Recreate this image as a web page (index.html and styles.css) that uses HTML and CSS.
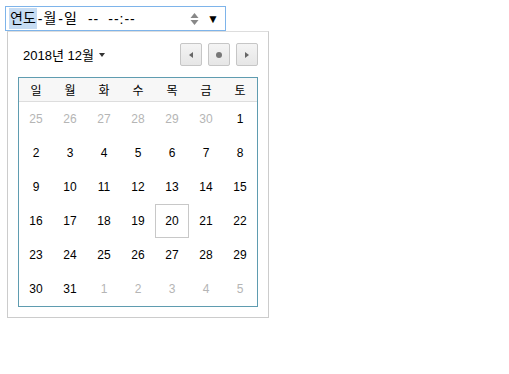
FILE: index.html
```html
<!DOCTYPE html>
<html lang="ko">
<head>
  <meta charset="UTF-8" />
  <title>날짜 선택</title>
  <link rel="stylesheet" href="styles.css">
</head>
<body>

  <!-- 입력 상자 -->
  <div class="field">
    <span class="seg active">연도</span><span class="sep">-</span><span class="seg">월</span><span class="sep">-</span><span class="seg">일</span>
    <span class="time">--</span>
    <span class="time">--:--</span>
    <span class="spin">
      <svg width="9" height="14" viewBox="0 0 9 14"><path d="M4.5 1 L8.5 6 H0.5 Z" fill="#888"/><path d="M4.5 13 L8.5 8 H0.5 Z" fill="#888"/></svg>
    </span>
    <span class="drop">&#9660;</span>
  </div>

  <!-- 달력 팝업 -->
  <div class="popup">
    <div class="head">
      <span class="month">2018년 12월 <span class="caret"></span></span>
      <div class="nav">
        <button class="nav-btn"><span class="tri-left"></span></button>
        <button class="nav-btn"><span class="dot"></span></button>
        <button class="nav-btn"><span class="tri-right"></span></button>
      </div>
    </div>

    <div class="cal">
      <div class="days">
        <span>일</span><span>월</span><span>화</span><span>수</span><span>목</span><span>금</span><span>토</span>
      </div>
      <div class="grid">
        <span class="other">25</span><span class="other">26</span><span class="other">27</span><span class="other">28</span><span class="other">29</span><span class="other">30</span><span>1</span>
        <span>2</span><span>3</span><span>4</span><span>5</span><span>6</span><span>7</span><span>8</span>
        <span>9</span><span>10</span><span>11</span><span>12</span><span>13</span><span>14</span><span>15</span>
        <span>16</span><span>17</span><span>18</span><span>19</span><span class="today">20</span><span>21</span><span>22</span>
        <span>23</span><span>24</span><span>25</span><span>26</span><span>27</span><span>28</span><span>29</span>
        <span>30</span><span>31</span><span class="other">1</span><span class="other">2</span><span class="other">3</span><span class="other">4</span><span class="other">5</span>
      </div>
    </div>
  </div>

</body>
</html>
```

FILE: styles.css
```css
/* 기본 */
body {
  margin: 0;
  background: #fff;
  font-family: "Liberation Sans", Arial, "Noto Sans CJK KR", sans-serif;
  color: #000;
}

/* 입력 상자 */
.field {
  margin: 6px 0 0 5px;
  width: 216px;
  height: 23px;
  border: 1px solid #7eb4ea;
  display: flex;
  align-items: center;
  padding-left: 3px;
  font-size: 14px;
}
.seg {
  padding: 2px 1px;
  line-height: 17px;
}
.seg.active {
  background: #c6dcf3;
}
.sep {
  margin-left: 1px;
}
.time {
  margin-left: 10px;
  letter-spacing: 1px;
}
.time + .time {
  margin-left: 9px;
}
.spin {
  margin-left: auto;
  display: flex;
  align-items: center;
}
.drop {
  font-size: 12px;
  margin: 0 6px 0 8px;
}

/* 팝업 */
.popup {
  margin-left: 7px;
  width: 240px;
  border: 1px solid #ccc;
  border-top-color: #ddd;
  padding: 11px 10px 10px 10px;
}
.head {
  display: flex;
  align-items: center;
  justify-content: space-between;
  height: 23px;
  margin-bottom: 11px;
}
.month {
  font-size: 13px;
  padding-left: 5px;
  display: flex;
  align-items: center;
}
.caret {
  display: inline-block;
  margin-left: 5px;
  border-left: 3px solid transparent;
  border-right: 3px solid transparent;
  border-top: 4px solid #333;
}
.nav {
  display: flex;
  gap: 6px;
}
.nav-btn {
  width: 22px;
  height: 23px;
  padding: 0;
  border: 1px solid #c6c6c6;
  border-radius: 2px;
  background: linear-gradient(#f4f4f4, #e6e6e6);
  display: flex;
  align-items: center;
  justify-content: center;
}
.tri-left {
  border-top: 3px solid transparent;
  border-bottom: 3px solid transparent;
  border-right: 4px solid #666;
}
.tri-right {
  border-top: 3px solid transparent;
  border-bottom: 3px solid transparent;
  border-left: 4px solid #666;
}
.dot {
  width: 6px;
  height: 6px;
  border-radius: 50%;
  background: #777;
}

/* 달력 */
.cal {
  border: 1px solid #5f9cb0;
}
.days {
  display: grid;
  grid-template-columns: repeat(7, 1fr);
  height: 23px;
  background: #f7f7f7;
  border-bottom: 1px solid #ddd;
  font-size: 12px;
  font-family: "Noto Sans CJK KR", sans-serif;
}
.days span {
  display: flex;
  align-items: center;
  justify-content: center;
}
.grid {
  display: grid;
  grid-template-columns: repeat(7, 1fr);
  grid-auto-rows: 34px;
  font-size: 12px;
}
.grid span {
  display: flex;
  align-items: center;
  justify-content: center;
}
.grid .other {
  color: #b5b5b5;
}
.grid .today {
  border: 1px solid #c8c8c8;
}
```
